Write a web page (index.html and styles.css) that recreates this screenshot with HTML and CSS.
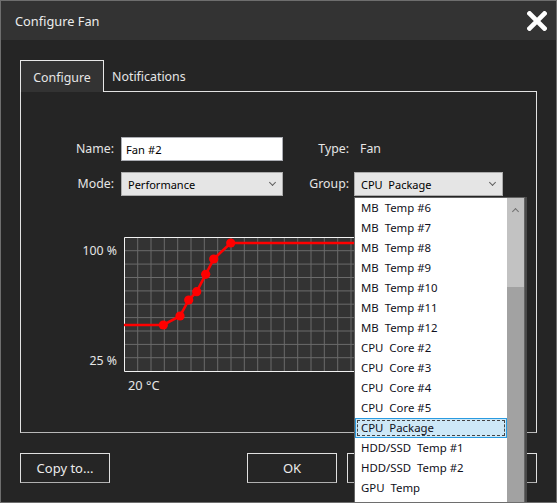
FILE: index.html
```html
<!DOCTYPE html>
<html lang="en">
<head>
    <meta charset="UTF-8">
    <title>Configure Fan</title>
    <link rel="stylesheet" href="styles.css">
</head>
<body>

<div class="window">
    <div class="titlebar">
        <span class="title">Configure Fan</span>
        <svg class="close" width="20" height="20" viewBox="0 0 20 20">
            <path d="M2.5 2.5 L17.5 17.5 M17.5 2.5 L2.5 17.5" stroke="#fff" stroke-width="4.6" stroke-linecap="square"/>
        </svg>
    </div>

    <div class="content">
        <div class="tabs">
            <div class="tab active">Configure</div>
            <div class="tab">Notifications</div>
        </div>

        <div class="panel">
            <!-- name / type / mode / group -->
            <div class="fields">
                <label class="lbl">Name:</label>
                <input class="text-input" type="text" value="Fan #2">
                <label class="lbl lbl-right">Type:</label>
                <span class="value">Fan</span>

                <label class="lbl">Mode:</label>
                <div class="combo"><span>Performance</span><i class="chev"></i></div>
                <label class="lbl lbl-right">Group:</label>
                <div class="combo"><span class="pre">CPU  Package</span><i class="chev"></i></div>
            </div>

            <!-- fan curve -->
            <div class="curve">
                <div class="axis-y">
                    <span>100 %</span>
                    <span>25 %</span>
                </div>
                <svg class="graph" width="380" height="135" viewBox="0 0 380 135">
                    <rect x="0" y="0" width="380" height="135" fill="#333"/>
                    <g stroke="#6b6b6b" stroke-width="1">
                        <path d="M13.7 0V135M27 0V135M40.3 0V135M53.7 0V135M67 0V135M80.3 0V135M93.7 0V135M107 0V135M120.3 0V135M133.7 0V135M147 0V135M160.3 0V135M173.7 0V135M187 0V135M200.3 0V135M213.7 0V135M227 0V135M240.3 0V135M253.7 0V135M267 0V135M280.3 0V135M293.7 0V135M307 0V135M320.3 0V135M333.7 0V135M347 0V135M360.3 0V135M373.7 0V135"/>
                        <path d="M0 13.7H380M0 27.1H380M0 40.5H380M0 53.9H380M0 67.2H380M0 80.6H380M0 94H380M0 107.4H380M0 120.7H380"/>
                    </g>
                    <path d="M0.5 0.5H380M0.5 0.5V134.5M0.5 134.5H380" stroke="#f2f2f2" stroke-width="1" fill="none"/>
                    <polyline points="0,88 39.3,88 56,79 64.7,63 72.7,54.7 81.7,37.3 89.7,22 106.7,6 380,6" fill="none" stroke="#ff0000" stroke-width="2.6"/>
                    <g fill="#ff0000">
                        <circle cx="39.3" cy="88" r="4.6"/>
                        <circle cx="56" cy="79" r="4.6"/>
                        <circle cx="64.7" cy="63" r="4.6"/>
                        <circle cx="72.7" cy="54.7" r="4.6"/>
                        <circle cx="81.7" cy="37.3" r="4.6"/>
                        <circle cx="89.7" cy="22" r="4.6"/>
                        <circle cx="106.7" cy="6" r="4.6"/>
                    </g>
                </svg>
            </div>
            <div class="axis-x">20 °C</div>
        </div>

        <div class="buttons">
            <button class="btn">Copy to...</button>
            <span class="spacer"></span>
            <button class="btn">OK</button>
            <button class="btn">Cancel</button>
            <button class="btn">Apply</button>
        </div>
    </div>

    <!-- open group dropdown -->
    <div class="dropdown">
        <ul class="options">
            <li>MB  Temp #6</li>
            <li>MB  Temp #7</li>
            <li>MB  Temp #8</li>
            <li>MB  Temp #9</li>
            <li>MB  Temp #10</li>
            <li>MB  Temp #11</li>
            <li>MB  Temp #12</li>
            <li>CPU  Core #2</li>
            <li>CPU  Core #3</li>
            <li>CPU  Core #4</li>
            <li>CPU  Core #5</li>
            <li class="selected">CPU  Package</li>
            <li>HDD/SSD  Temp #1</li>
            <li>HDD/SSD  Temp #2</li>
            <li>GPU  Temp</li>
            <li>DRAM  Temp #1</li>
        </ul>
        <div class="scrollbar">
            <div class="scroll-top"><i class="chev up"></i></div>
            <div class="scroll-rest"></div>
        </div>
    </div>
</div>

</body>
</html>
```

FILE: styles.css
```css
body {
    margin: 0;
    background: #252525;
    font-family: "Noto Sans", "Open Sans", sans-serif;
}
.window {
    position: relative;
    width: 557px;
    height: 503px;
    box-sizing: border-box;
    border: 1px solid #6e6e6e;
    background: #252525;
    overflow: hidden;
    color: #e6e6e6;
}
.titlebar {
    height: 39px;
    background: #333;
    display: flex;
    align-items: center;
    justify-content: space-between;
    padding: 0 9px 0 14px;
}
.title {
    font-size: 12.8px;
    color: #ececec;
    margin-top: 1px;
}
.close {
    display: block;
    margin-top: 1px;
}
.content {
    padding: 20px 19px 0 19px;
}
.tabs {
    display: flex;
    height: 31px;
}
.tab {
    font-size: 12.4px;
    display: flex;
    align-items: center;
    color: #e6e6e6;
    padding-top: 1px;
}
.tab.active {
    position: relative;
    z-index: 1;
    box-sizing: border-box;
    width: 84px;
    height: 32px;
    justify-content: center;
    border: 1px solid #e8e8e8;
    border-bottom: 0;
    background: #333;
}
.tab + .tab {
    margin-left: 8px;
}
.panel {
    box-sizing: border-box;
    height: 342px;
    border: 1px solid #e2e2e2;
    border-bottom-color: #b8b8b8;
}
.fields {
    display: grid;
    grid-template-columns: 100px 162px 71px 149px;
    grid-auto-rows: 24px;
    row-gap: 11px;
    padding-top: 45px;
    font-size: 12.3px;
}
.lbl {
    text-align: right;
    padding-right: 7px;
    line-height: 24px;
}
.lbl-right {
    padding-right: 5px;
}
.value {
    line-height: 24px;
    padding-left: 6px;
}
.text-input {
    box-sizing: border-box;
    height: 24px;
    margin: 0;
    border: 1px solid #abadb3;
    padding: 0 4px;
    font: 11.2px "Noto Sans", sans-serif;
    color: #000;
    background: #fff;
}
.combo {
    box-sizing: border-box;
    height: 24px;
    border: 1px solid #acacac;
    background: #e5e5e5;
    color: #000;
    font-size: 11px;
    display: flex;
    align-items: center;
    justify-content: space-between;
    padding: 0 6px 0 6px;
}
.pre {
    white-space: pre;
}
.chev {
    width: 4px;
    height: 4px;
    border-right: 1px solid #606060;
    border-bottom: 1px solid #606060;
    transform: rotate(45deg);
    margin: -3px 1px 0 0;
}
.chev.up {
    transform: rotate(225deg);
    margin: 3px 0 0 0;
    border-color: #707070;
}
.curve {
    display: flex;
    margin-top: 41px;
}
.axis-y {
    width: 96px;
    height: 135px;
    box-sizing: border-box;
    padding: 4px 0 2px 0;
    display: flex;
    flex-direction: column;
    justify-content: space-between;
    align-items: flex-end;
    font-size: 12.3px;
    line-height: 19px;
    margin-right: 7px;
}
.graph {
    display: block;
}
.axis-x {
    margin: 4px 0 0 107px;
    font-size: 12.8px;
    line-height: 19px;
}
.buttons {
    display: flex;
    gap: 10px;
    margin-top: 20px;
}
.spacer {
    flex: 1;
}
.btn {
    width: 90px;
    height: 30px;
    box-sizing: border-box;
    border: 1px solid #e0e0e0;
    border-bottom-color: #b0b0b0;
    background: #252525;
    color: #ececec;
    font: 13px "Noto Sans", sans-serif;
    padding: 0;
}
.dropdown {
    position: absolute;
    left: 353px;
    top: 196px;
    width: 169px;
    height: 320px;
    display: flex;
    background: #fff;
    border: 1px solid #646464;
    border-bottom: 0;
    box-shadow: 2px 0 0 #4a4a4a;
}
.options {
    list-style: none;
    margin: 0;
    padding: 0;
    flex: 1;
}
.options li {
    box-sizing: border-box;
    height: 20px;
    line-height: 20px;
    padding-left: 6px;
    font-size: 11.4px;
    color: #101020;
    white-space: pre;
}
.options li.selected {
    background: #cde8f7;
    border: 1px solid #2a9be0;
    outline: 1px dashed #444;
    outline-offset: -3px;
    line-height: 18px;
    padding-left: 5px;
}
.scrollbar {
    width: 17px;
    display: flex;
    flex-direction: column;
}
.scroll-top {
    height: 89px;
    background: #c2c2c2;
    display: flex;
    justify-content: center;
    align-items: flex-start;
    padding-top: 8px;
    box-sizing: border-box;
}
.scroll-rest {
    flex: 1;
    background: #a2a2a2;
}
```
